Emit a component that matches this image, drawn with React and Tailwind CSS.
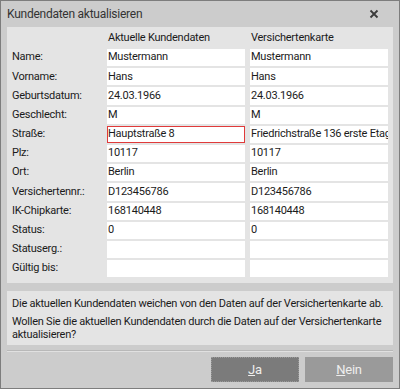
import React from "react";

const rows = [
  ["Name:", "Mustermann", "Mustermann"],
  ["Vorname:", "Hans", "Hans"],
  ["Geburtsdatum:", "24.03.1966", "24.03.1966"],
  ["Geschlecht:", "M", "M"],
  ["Straße:", "Hauptstraße 8", "Friedrichstraße 136 erste Etage", true],
  ["Plz:", "10117", "10117"],
  ["Ort:", "Berlin", "Berlin"],
  ["Versichertennr.:", "D123456786", "D123456786"],
  ["IK-Chipkarte:", "168140448", "168140448"],
  ["Status:", "0", "0"],
  ["Statuserg.:", "", ""],
  ["Gültig bis:", "", ""],
];

export default function App() {
  return (
    <div
      className="w-[400px] h-[389px] border border-[#7d7d7d] bg-[#cccccc] flex flex-col text-[11px] tracking-[-0.25px] text-[#1b1b1b] overflow-hidden"
      style={{ fontFamily: 'Roboto, "Noto Sans", sans-serif' }}
    >
      <div className="h-[26px] shrink-0 flex items-center justify-between pl-[6px] pr-[20px]">
        <span className="text-[12px] text-[#333333]">Kundendaten aktualisieren</span>
        <svg width="10" height="10" viewBox="0 0 10 10">
          <path d="M1.5 1.5 L8.5 8.5 M8.5 1.5 L1.5 8.5" stroke="#3a3a3a" strokeWidth="1.8" />
        </svg>
      </div>
      <div className="mx-[6px] h-[256px] shrink-0 bg-[#e4e4e4] px-[5px]">
        <div className="grid grid-cols-[90px_138px_138px] gap-x-[5px]">
          <div className="h-[22px]" />
          <div className="h-[22px] flex items-center pl-[1px]">Aktuelle Kundendaten</div>
          <div className="h-[22px] flex items-center pl-[1px]">Versichertenkarte</div>
        </div>
        <div className="grid grid-cols-[90px_138px_138px] gap-x-[5px] gap-y-[2px]">
          {rows.map(([label, a, b, diff]) => (
            <React.Fragment key={label}>
              <div className="h-[17.2px] flex items-center whitespace-nowrap">{label}</div>
              <div
                className={
                  "h-[17.2px] bg-white flex items-center whitespace-nowrap overflow-hidden " +
                  (diff ? "border border-[#e03a3a] pl-[0px]" : "pl-[1px]")
                }
              >
                {a}
              </div>
              <div className="h-[17.2px] bg-white flex items-center pl-[1px] whitespace-nowrap overflow-hidden">
                {b}
              </div>
            </React.Fragment>
          ))}
        </div>
      </div>
      <div className="mx-[6px] mt-[8px] h-[54px] shrink-0 bg-[#e4e4e4] px-[5px] pt-[6px] leading-[13px]">
        <div className="whitespace-nowrap">Die aktuellen Kundendaten weichen von den Daten auf der Versichertenkarte ab.</div>
        <div className="mt-[5px]">
          Wollen Sie die aktuellen Kundendaten durch die Daten auf der Versichertenkarte aktualisieren?
        </div>
      </div>
      <div className="mx-[6px] mt-[5px] h-[2px] shrink-0 bg-[#e0e0e0] border-t border-[#b8b8b8]" />
      <div className="mt-[5px] flex justify-end gap-[6px] pr-[6px]">
        <button className="w-[88px] h-[25px] bg-[#7b7b7b] text-[#eeeeee] text-[13px] flex items-center justify-center border border-dotted border-[#9a9a9a]">
          <span><span className="underline">J</span>a</span>
        </button>
        <button className="w-[88px] h-[25px] bg-[#9a9a9a] text-[#eeeeee] text-[13px] flex items-center justify-center">
          <span><span className="underline">N</span>ein</span>
        </button>
      </div>
    </div>
  );
}
